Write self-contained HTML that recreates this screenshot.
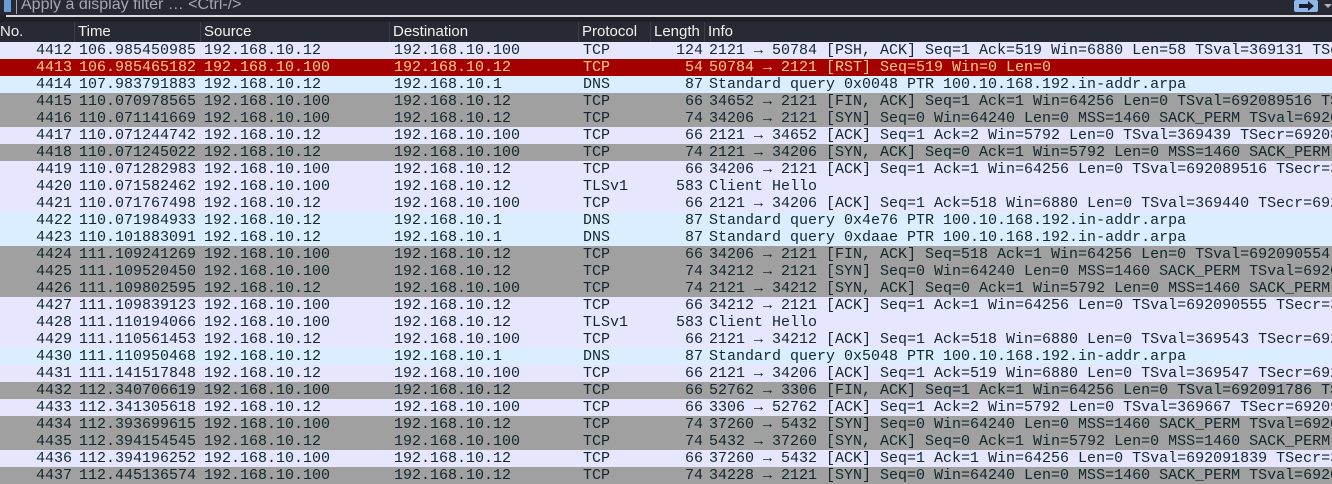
<!DOCTYPE html><html><head><meta charset="utf-8"><style>
body{margin:0;width:1332px;height:481px;overflow:hidden;background:#1e2027;font-family:"Liberation Sans",sans-serif;position:relative}
.fb{position:absolute;left:0;top:0;width:1332px;height:15px;background:#262932}
.fb .t{position:absolute;left:21px;top:-4px;font-size:16px;color:#a6a8b0}
.fb .ln{position:absolute;left:6px;top:15px;width:1326px;height:2px;background:#d8d8dc}
.fb .sp{position:absolute;left:16px;top:0;width:1px;height:14px;background:#a6a8b0}
.bm{position:absolute;left:4px;top:0;width:7px;height:12px;background:#6a9bd1}
.ar{position:absolute;left:1294px;top:0;width:24px;height:12px;background:#8fb8e8;border-radius:2px}
.ar b{position:absolute;left:5px;top:4px;width:9px;height:4px;background:#1a2230}
.ar i{position:absolute;left:14px;top:1px;border-left:6px solid #1a2230;border-top:5px solid transparent;border-bottom:5px solid transparent}
.dd{position:absolute;left:1324px;top:4px;border-top:4px solid #b0b2b8;border-left:4px solid transparent;border-right:4px solid transparent}
.hd{position:absolute;left:0;top:22px;width:1332px;height:20px;background:#272a33;color:#f0f0f0;font-size:15px}
.hd span{position:absolute;top:1px}
.hd i{position:absolute;top:0;width:1px;height:20px;background:#3c3f48}
.r{position:absolute;left:0;width:1332px;height:17px;font-family:"Liberation Mono",monospace;font-size:15px;line-height:17px;color:#12272e;white-space:pre;overflow:hidden}
.r span{position:absolute;top:0}
.n{right:1260px}.l{right:629px}
.a{background:#e7e6ff}.d{background:#daeeff}.g{background:#a0a0a0}.x{background:#a40000;color:#ffcf80}
</style></head><body>
<div class="fb"><div class="bm"></div><div class="sp"></div><div class="t">Apply a display filter … &lt;Ctrl-/&gt;</div><div class="ar"><b></b><i></i></div><div class="dd"></div><div class="ln"></div></div>
<div class="hd"><span style="left:0">No.</span><i style="left:74px"></i><span style="left:78px">Time</span><i style="left:200px"></i><span style="left:204px">Source</span><i style="left:389px"></i><span style="left:393px">Destination</span><i style="left:578px"></i><span style="left:582px">Protocol</span><i style="left:650px"></i><span style="left:654px">Length</span><i style="left:704px"></i><span style="left:708px">Info</span></div>
<div class="r a" style="top:42px"><span class="n">4412</span><span style="left:79px">106.985450985</span><span style="left:204px">192.168.10.12</span><span style="left:394px">192.168.10.100</span><span style="left:583px">TCP</span><span class="l">124</span><span style="left:709px">2121 → 50784 [PSH, ACK] Seq=1 Ack=519 Win=6880 Len=58 TSval=369131 TSecr=692089516</span></div>
<div class="r x" style="top:59px"><span class="n">4413</span><span style="left:79px">106.985465182</span><span style="left:204px">192.168.10.100</span><span style="left:394px">192.168.10.12</span><span style="left:583px">TCP</span><span class="l">54</span><span style="left:709px">50784 → 2121 [RST] Seq=519 Win=0 Len=0</span></div>
<div class="r d" style="top:76px"><span class="n">4414</span><span style="left:79px">107.983791883</span><span style="left:204px">192.168.10.12</span><span style="left:394px">192.168.10.1</span><span style="left:583px">DNS</span><span class="l">87</span><span style="left:709px">Standard query 0x0048 PTR 100.10.168.192.in-addr.arpa</span></div>
<div class="r g" style="top:93px"><span class="n">4415</span><span style="left:79px">110.070978565</span><span style="left:204px">192.168.10.100</span><span style="left:394px">192.168.10.12</span><span style="left:583px">TCP</span><span class="l">66</span><span style="left:709px">34652 → 2121 [FIN, ACK] Seq=1 Ack=1 Win=64256 Len=0 TSval=692089516 TSecr=369131</span></div>
<div class="r g" style="top:110px"><span class="n">4416</span><span style="left:79px">110.071141669</span><span style="left:204px">192.168.10.100</span><span style="left:394px">192.168.10.12</span><span style="left:583px">TCP</span><span class="l">74</span><span style="left:709px">34206 → 2121 [SYN] Seq=0 Win=64240 Len=0 MSS=1460 SACK_PERM TSval=692089516</span></div>
<div class="r a" style="top:127px"><span class="n">4417</span><span style="left:79px">110.071244742</span><span style="left:204px">192.168.10.12</span><span style="left:394px">192.168.10.100</span><span style="left:583px">TCP</span><span class="l">66</span><span style="left:709px">2121 → 34652 [ACK] Seq=1 Ack=2 Win=5792 Len=0 TSval=369439 TSecr=692089516</span></div>
<div class="r g" style="top:144px"><span class="n">4418</span><span style="left:79px">110.071245022</span><span style="left:204px">192.168.10.12</span><span style="left:394px">192.168.10.100</span><span style="left:583px">TCP</span><span class="l">74</span><span style="left:709px">2121 → 34206 [SYN, ACK] Seq=0 Ack=1 Win=5792 Len=0 MSS=1460 SACK_PERM TSval=369439</span></div>
<div class="r a" style="top:161px"><span class="n">4419</span><span style="left:79px">110.071282983</span><span style="left:204px">192.168.10.100</span><span style="left:394px">192.168.10.12</span><span style="left:583px">TCP</span><span class="l">66</span><span style="left:709px">34206 → 2121 [ACK] Seq=1 Ack=1 Win=64256 Len=0 TSval=692089516 TSecr=369439</span></div>
<div class="r a" style="top:178px"><span class="n">4420</span><span style="left:79px">110.071582462</span><span style="left:204px">192.168.10.100</span><span style="left:394px">192.168.10.12</span><span style="left:583px">TLSv1</span><span class="l">583</span><span style="left:709px">Client Hello</span></div>
<div class="r a" style="top:195px"><span class="n">4421</span><span style="left:79px">110.071767498</span><span style="left:204px">192.168.10.12</span><span style="left:394px">192.168.10.100</span><span style="left:583px">TCP</span><span class="l">66</span><span style="left:709px">2121 → 34206 [ACK] Seq=1 Ack=518 Win=6880 Len=0 TSval=369440 TSecr=692089516</span></div>
<div class="r d" style="top:212px"><span class="n">4422</span><span style="left:79px">110.071984933</span><span style="left:204px">192.168.10.12</span><span style="left:394px">192.168.10.1</span><span style="left:583px">DNS</span><span class="l">87</span><span style="left:709px">Standard query 0x4e76 PTR 100.10.168.192.in-addr.arpa</span></div>
<div class="r d" style="top:229px"><span class="n">4423</span><span style="left:79px">110.101883091</span><span style="left:204px">192.168.10.12</span><span style="left:394px">192.168.10.1</span><span style="left:583px">DNS</span><span class="l">87</span><span style="left:709px">Standard query 0xdaae PTR 100.10.168.192.in-addr.arpa</span></div>
<div class="r g" style="top:246px"><span class="n">4424</span><span style="left:79px">111.109241269</span><span style="left:204px">192.168.10.100</span><span style="left:394px">192.168.10.12</span><span style="left:583px">TCP</span><span class="l">66</span><span style="left:709px">34206 → 2121 [FIN, ACK] Seq=518 Ack=1 Win=64256 Len=0 TSval=692090554</span></div>
<div class="r g" style="top:263px"><span class="n">4425</span><span style="left:79px">111.109520450</span><span style="left:204px">192.168.10.100</span><span style="left:394px">192.168.10.12</span><span style="left:583px">TCP</span><span class="l">74</span><span style="left:709px">34212 → 2121 [SYN] Seq=0 Win=64240 Len=0 MSS=1460 SACK_PERM TSval=692090554</span></div>
<div class="r g" style="top:280px"><span class="n">4426</span><span style="left:79px">111.109802595</span><span style="left:204px">192.168.10.12</span><span style="left:394px">192.168.10.100</span><span style="left:583px">TCP</span><span class="l">74</span><span style="left:709px">2121 → 34212 [SYN, ACK] Seq=0 Ack=1 Win=5792 Len=0 MSS=1460 SACK_PERM TSval=369543</span></div>
<div class="r a" style="top:297px"><span class="n">4427</span><span style="left:79px">111.109839123</span><span style="left:204px">192.168.10.100</span><span style="left:394px">192.168.10.12</span><span style="left:583px">TCP</span><span class="l">66</span><span style="left:709px">34212 → 2121 [ACK] Seq=1 Ack=1 Win=64256 Len=0 TSval=692090555 TSecr=369543</span></div>
<div class="r a" style="top:314px"><span class="n">4428</span><span style="left:79px">111.110194066</span><span style="left:204px">192.168.10.100</span><span style="left:394px">192.168.10.12</span><span style="left:583px">TLSv1</span><span class="l">583</span><span style="left:709px">Client Hello</span></div>
<div class="r a" style="top:331px"><span class="n">4429</span><span style="left:79px">111.110561453</span><span style="left:204px">192.168.10.12</span><span style="left:394px">192.168.10.100</span><span style="left:583px">TCP</span><span class="l">66</span><span style="left:709px">2121 → 34212 [ACK] Seq=1 Ack=518 Win=6880 Len=0 TSval=369543 TSecr=692090555</span></div>
<div class="r d" style="top:348px"><span class="n">4430</span><span style="left:79px">111.110950468</span><span style="left:204px">192.168.10.12</span><span style="left:394px">192.168.10.1</span><span style="left:583px">DNS</span><span class="l">87</span><span style="left:709px">Standard query 0x5048 PTR 100.10.168.192.in-addr.arpa</span></div>
<div class="r a" style="top:365px"><span class="n">4431</span><span style="left:79px">111.141517848</span><span style="left:204px">192.168.10.12</span><span style="left:394px">192.168.10.100</span><span style="left:583px">TCP</span><span class="l">66</span><span style="left:709px">2121 → 34206 [ACK] Seq=1 Ack=519 Win=6880 Len=0 TSval=369547 TSecr=692090554</span></div>
<div class="r g" style="top:382px"><span class="n">4432</span><span style="left:79px">112.340706619</span><span style="left:204px">192.168.10.100</span><span style="left:394px">192.168.10.12</span><span style="left:583px">TCP</span><span class="l">66</span><span style="left:709px">52762 → 3306 [FIN, ACK] Seq=1 Ack=1 Win=64256 Len=0 TSval=692091786 TSecr=369547</span></div>
<div class="r a" style="top:399px"><span class="n">4433</span><span style="left:79px">112.341305618</span><span style="left:204px">192.168.10.12</span><span style="left:394px">192.168.10.100</span><span style="left:583px">TCP</span><span class="l">66</span><span style="left:709px">3306 → 52762 [ACK] Seq=1 Ack=2 Win=5792 Len=0 TSval=369667 TSecr=692091786</span></div>
<div class="r g" style="top:416px"><span class="n">4434</span><span style="left:79px">112.393699615</span><span style="left:204px">192.168.10.100</span><span style="left:394px">192.168.10.12</span><span style="left:583px">TCP</span><span class="l">74</span><span style="left:709px">37260 → 5432 [SYN] Seq=0 Win=64240 Len=0 MSS=1460 SACK_PERM TSval=692091839</span></div>
<div class="r g" style="top:433px"><span class="n">4435</span><span style="left:79px">112.394154545</span><span style="left:204px">192.168.10.12</span><span style="left:394px">192.168.10.100</span><span style="left:583px">TCP</span><span class="l">74</span><span style="left:709px">5432 → 37260 [SYN, ACK] Seq=0 Ack=1 Win=5792 Len=0 MSS=1460 SACK_PERM TSval=369672</span></div>
<div class="r a" style="top:450px"><span class="n">4436</span><span style="left:79px">112.394196252</span><span style="left:204px">192.168.10.100</span><span style="left:394px">192.168.10.12</span><span style="left:583px">TCP</span><span class="l">66</span><span style="left:709px">37260 → 5432 [ACK] Seq=1 Ack=1 Win=64256 Len=0 TSval=692091839 TSecr=369672</span></div>
<div class="r g" style="top:467px"><span class="n">4437</span><span style="left:79px">112.445136574</span><span style="left:204px">192.168.10.100</span><span style="left:394px">192.168.10.12</span><span style="left:583px">TCP</span><span class="l">74</span><span style="left:709px">34228 → 2121 [SYN] Seq=0 Win=64240 Len=0 MSS=1460 SACK_PERM TSval=692091890</span></div>
</body></html>
